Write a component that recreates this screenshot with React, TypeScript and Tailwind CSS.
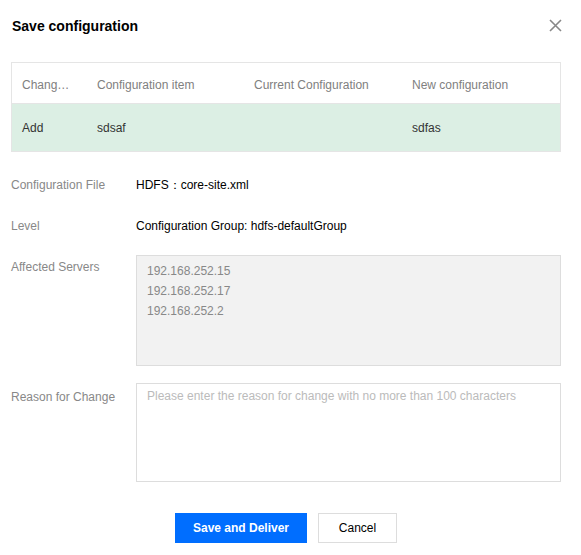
import React from "react";

const font = { fontFamily: '"Liberation Sans", Arial, sans-serif' };

export default function App() {
  return (
    <div className="w-[581px] h-[555px] bg-white text-[12px] leading-[18px] overflow-hidden" style={font}>
      <div className="pl-[11px] pr-[20px]">
        {/* header */}
        <div className="flex items-center justify-between pt-[18px] h-[34px]">
          <div className="pl-[1px] text-[14px] leading-[16px] font-bold text-black">Save configuration</div>
          <svg width="13" height="13" viewBox="0 0 13 13" className="translate-x-[1px] -translate-y-[1px]">
            <path d="M1 1 L12 12 M12 1 L1 12" stroke="#888" strokeWidth="1.6" />
          </svg>
        </div>

        {/* table */}
        <div className="mt-[28px] border border-[#e5e5e5]">
          <div className="grid grid-cols-[75px_157px_158px_1fr] h-[41px] pt-[3px] items-center text-[#808080] border-b border-[#e5e5e5]">
            <div className="pl-[10px] truncate">Chang…</div>
            <div className="pl-[10px]">Configuration item</div>
            <div className="pl-[10px]">Current Configuration</div>
            <div className="pl-[10px]">New configuration</div>
          </div>
          <div className="grid grid-cols-[75px_157px_158px_1fr] h-[47px] items-center bg-[#dcefe4] text-[#333]">
            <div className="pl-[10px]">Add</div>
            <div className="pl-[10px]">sdsaf</div>
            <div className="pl-[10px]"></div>
            <div className="pl-[10px]">sdfas</div>
          </div>
        </div>

        {/* form */}
        <div className="mt-[24px] flex">
          <div className="w-[125px] text-[#888]">Configuration File</div>
          <div className="text-black">HDFS：core-site.xml</div>
        </div>
        <div className="mt-[23px] flex">
          <div className="w-[125px] text-[#888]">Level</div>
          <div className="text-black">Configuration Group: hdfs-defaultGroup</div>
        </div>
        <div className="mt-[20px] flex">
          <div className="w-[125px] pt-[3px] text-[#888]">Affected Servers</div>
          <div className="flex-1 h-[111px] bg-[#f2f2f2] border border-[#dddddd] pt-[5px] px-[10px] text-[#888] leading-[20px]">
            <div>192.168.252.15</div>
            <div>192.168.252.17</div>
            <div>192.168.252.2</div>
          </div>
        </div>
        <div className="mt-[17px] flex">
          <div className="w-[125px] pt-[5px] text-[#888]">Reason for Change</div>
          <textarea
            className="flex-1 h-[99px] border border-[#dddddd] pt-[3px] px-[10px] text-[12px] leading-[18px] resize-none outline-none placeholder:text-[#bbbbbb]"
            style={font}
            placeholder="Please enter the reason for change with no more than 100 characters"
          />
        </div>

        {/* buttons */}
        <div className="mt-[31px] flex justify-center gap-[11px]">
          <button className="h-[30px] w-[132px] bg-[#006eff] text-white font-bold text-[12px]" style={font}>
            Save and Deliver
          </button>
          <button className="h-[30px] w-[79px] bg-white border border-[#dddddd] text-black text-[12px]" style={font}>
            Cancel
          </button>
        </div>
      </div>
    </div>
  );
}
